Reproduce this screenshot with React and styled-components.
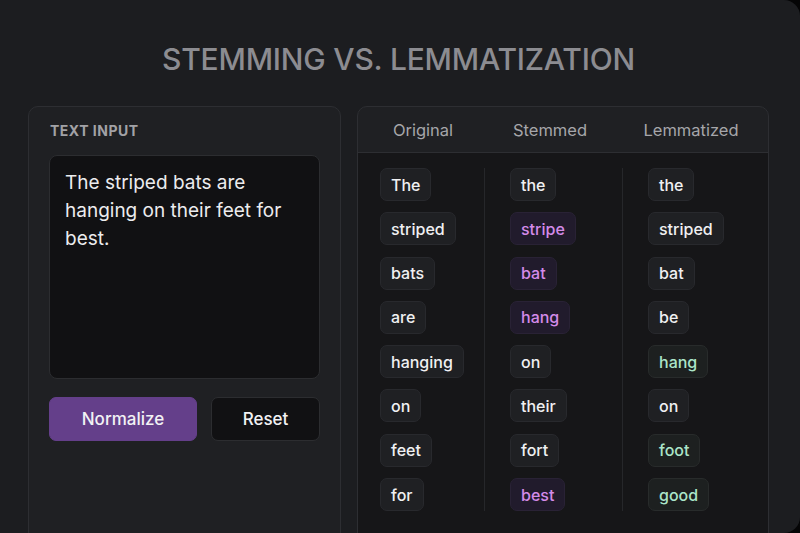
import React, { useState } from "react";
import styled, { createGlobalStyle } from "styled-components";

const GlobalStyle = createGlobalStyle`
  html, body {
    margin: 0;
    padding: 0;
    background: #050506;
  }
  * {
    box-sizing: border-box;
  }
`;

const Page = styled.div`
  width: 800px;
  height: 533px;
  overflow: hidden;
  background: #1c1d20;
  border-radius: 0 16px 16px 0;
  font-family: Inter, "Noto Sans", sans-serif;
  padding: 41px 31px 0 28px;
`;

const Title = styled.h1`
  margin: 0 0 29px;
  height: 36px;
  line-height: 36px;
  text-align: center;
  font-size: 30px;
  font-weight: 500;
  letter-spacing: -0.2px;
  color: #8c8c91;
`;

const Columns = styled.div`
  display: grid;
  grid-template-columns: 313px 1fr;
  gap: 16px;
  align-items: start;
`;

const Panel = styled.section`
  background: #1f2023;
  border: 1px solid #2d2e32;
  border-radius: 10px;
  min-height: 460px;
  overflow: hidden;
`;

const InputPanel = styled(Panel)`
  padding: 16px 20px;
`;

const Label = styled.div`
  font-size: 14px;
  line-height: 16px;
  font-weight: 700;
  letter-spacing: 0.5px;
  color: #a2a2a6;
  margin-bottom: 16px;
  padding-left: 1px;
`;

const TextArea = styled.textarea`
  display: block;
  width: 100%;
  height: 224px;
  resize: none;
  background: #111113;
  border: 1px solid #2c2d30;
  border-radius: 8px;
  padding: 13px 15px;
  font-family: inherit;
  font-size: 19px;
  line-height: 28px;
  color: #ececee;
  &:focus {
    outline: none;
  }
`;

const ButtonRow = styled.div`
  display: grid;
  grid-template-columns: 148px 1fr;
  gap: 14px;
  margin-top: 18px;
`;

const Button = styled.button`
  height: 44px;
  border-radius: 7px;
  font-family: inherit;
  font-size: 17px;
  font-weight: 500;
  color: #f2f2f4;
  cursor: pointer;
  background: ${(p) => (p.$primary ? "#643f8a" : "#111113")};
  border: 1px solid ${(p) => (p.$primary ? "#643f8a" : "#2c2d30")};
`;

const Grid = styled.div`
  display: grid;
  grid-template-columns: 126px 138px 1fr;
`;

const Header = styled(Grid)`
  height: 46px;
  border-bottom: 1px solid #2d2e32;
  align-items: center;
`;

const HeaderCell = styled.div`
  text-align: center;
  font-size: 16.5px;
  color: #a6a6aa;
  margin-left: ${(p) => p.$shift || 0}px;
`;

const Body = styled(Grid)`
  background: #161618;
  padding: 15px 0 40px;
  min-height: 420px;
  align-items: start;
`;

const Column = styled.div`
  display: flex;
  flex-direction: column;
  align-items: flex-start;
  gap: 11.3px;
  padding-left: ${(p) => (p.$first ? 22 : 25)}px;
  border-left: ${(p) => (p.$first ? "none" : "1px solid #26272a")};
`;

const tones = {
  plain: { bg: "#1f2023", border: "#28292d", color: "#f0f0f2" },
  stem: { bg: "#211b2c", border: "#292235", color: "#d48be9" },
  lemma: { bg: "#1d2020", border: "#282b2b", color: "#abe5c9" },
};

const Chip = styled.span`
  height: 33px;
  display: inline-flex;
  align-items: center;
  padding: 0 10px;
  border-radius: 7px;
  font-size: 16px;
  font-weight: 500;
  background: ${(p) => tones[p.$tone].bg};
  border: 1px solid ${(p) => tones[p.$tone].border};
  color: ${(p) => tones[p.$tone].color};
`;

const rows = [
  ["The", "the", "the"],
  ["striped", "stripe*", "striped"],
  ["bats", "bat*", "bat"],
  ["are", "hang*", "be"],
  ["hanging", "on", "hang+"],
  ["on", "their", "on"],
  ["feet", "fort", "foot+"],
  ["for", "best*", "good+"],
];

const parse = (w) => {
  if (w.endsWith("*")) return { text: w.slice(0, -1), tone: "stem" };
  if (w.endsWith("+")) return { text: w.slice(0, -1), tone: "lemma" };
  return { text: w, tone: "plain" };
};

export default function App() {
  const initial = "The striped bats are hanging on their feet for best.";
  const [text, setText] = useState(initial);

  return (
    <>
      <GlobalStyle />
      <Page>
        <Title>STEMMING VS. LEMMATIZATION</Title>
        <Columns>
          <InputPanel>
            <Label>TEXT INPUT</Label>
            <TextArea value={text} onChange={(e) => setText(e.target.value)} />
            <ButtonRow>
              <Button $primary>Normalize</Button>
              <Button onClick={() => setText(initial)}>Reset</Button>
            </ButtonRow>
          </InputPanel>
          <Panel>
            <Header>
              <HeaderCell $shift={4}>Original</HeaderCell>
              <HeaderCell $shift={-6}>Stemmed</HeaderCell>
              <HeaderCell $shift={-8}>Lemmatized</HeaderCell>
            </Header>
            <Body>
              {[0, 1, 2].map((c) => (
                <Column key={c} $first={c === 0}>
                  {rows.map((r, i) => {
                    const { text: t, tone } = parse(r[c]);
                    return (
                      <Chip key={i} $tone={tone}>
                        {t}
                      </Chip>
                    );
                  })}
                </Column>
              ))}
            </Body>
          </Panel>
        </Columns>
      </Page>
    </>
  );
}
